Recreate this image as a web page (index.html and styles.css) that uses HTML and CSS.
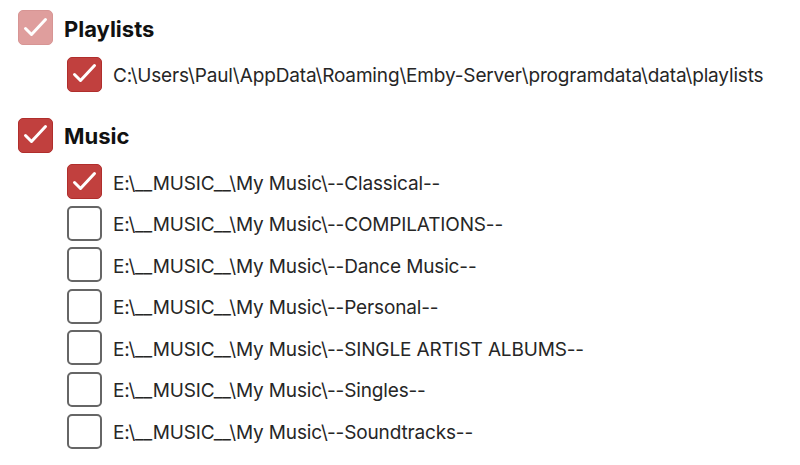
FILE: index.html
```html
<!DOCTYPE html>
<html>
<head>
<meta charset="utf-8">
<link rel="stylesheet" href="styles.css">
</head>
<body>
<div class="tree">
  <section class="group">
    <div class="row header">
      <span class="box checked faded"><svg viewBox="0 0 35 35"><path d="M7.5 18.5 L13.5 24.5 L27.5 9.5"/></svg></span>
      <span class="title">Playlists</span>
    </div>
    <div class="children">
      <div class="row"><span class="box checked"><svg viewBox="0 0 35 35"><path d="M7.5 18.5 L13.5 24.5 L27.5 9.5"/></svg></span><span class="label">C:\Users\Paul\AppData\Roaming\Emby-Server\programdata\data\playlists</span></div>
    </div>
  </section>
  <section class="group">
    <div class="row header">
      <span class="box checked"><svg viewBox="0 0 35 35"><path d="M7.5 18.5 L13.5 24.5 L27.5 9.5"/></svg></span>
      <span class="title">Music</span>
    </div>
    <div class="children">
      <div class="row"><span class="box checked"><svg viewBox="0 0 35 35"><path d="M7.5 18.5 L13.5 24.5 L27.5 9.5"/></svg></span><span class="label">E:\__MUSIC__\My Music\--Classical--</span></div>
      <div class="row"><span class="box"></span><span class="label">E:\__MUSIC__\My Music\--COMPILATIONS--</span></div>
      <div class="row"><span class="box"></span><span class="label">E:\__MUSIC__\My Music\--Dance Music--</span></div>
      <div class="row"><span class="box"></span><span class="label">E:\__MUSIC__\My Music\--Personal--</span></div>
      <div class="row"><span class="box"></span><span class="label">E:\__MUSIC__\My Music\--SINGLE ARTIST ALBUMS--</span></div>
      <div class="row"><span class="box"></span><span class="label">E:\__MUSIC__\My Music\--Singles--</span></div>
      <div class="row"><span class="box"></span><span class="label">E:\__MUSIC__\My Music\--Soundtracks--</span></div>
    </div>
  </section>
</div>
</body>
</html>
```
FILE: styles.css
```css
html, body {
  margin: 0;
  padding: 0;
  background: #ffffff;
}
body {
  font-family: Inter, "Noto Sans", "Liberation Sans", sans-serif;
  color: #1a1a1a;
}
.tree {
  padding: 10px 0 0 18px;
  display: flex;
  flex-direction: column;
  gap: 26px;
}
.group {
  display: flex;
  flex-direction: column;
  gap: 11.5px;
}
.children {
  display: flex;
  flex-direction: column;
  gap: 6.6px;
  padding-left: 49px;
}
.row {
  display: flex;
  align-items: center;
  height: 35px;
  gap: 11px;
}
.box {
  box-sizing: border-box;
  flex: none;
  width: 35px;
  height: 35px;
  border: 2.5px solid #666666;
  border-radius: 5px;
  background: #ffffff;
  display: flex;
}
.box svg {
  width: 100%;
  height: 100%;
}
.box.checked {
  border: 1.5px solid #b02e2c;
  background: #c1403e;
}
.box.checked svg {
  margin: -1.5px;
  width: 35px;
  height: 35px;
}
.box path {
  fill: none;
  stroke: #ffffff;
  stroke-width: 3;
  stroke-linecap: round;
  stroke-linejoin: round;
}
.box.faded {
  opacity: 0.5;
}
.title {
  font-size: 22px;
  font-weight: 700;
  color: #111111;
  padding-top: 2px;
}
.label {
  font-size: 19px;
  letter-spacing: -0.15px;
  font-weight: 400;
  color: #262626;
  padding-top: 3px;
}
```
